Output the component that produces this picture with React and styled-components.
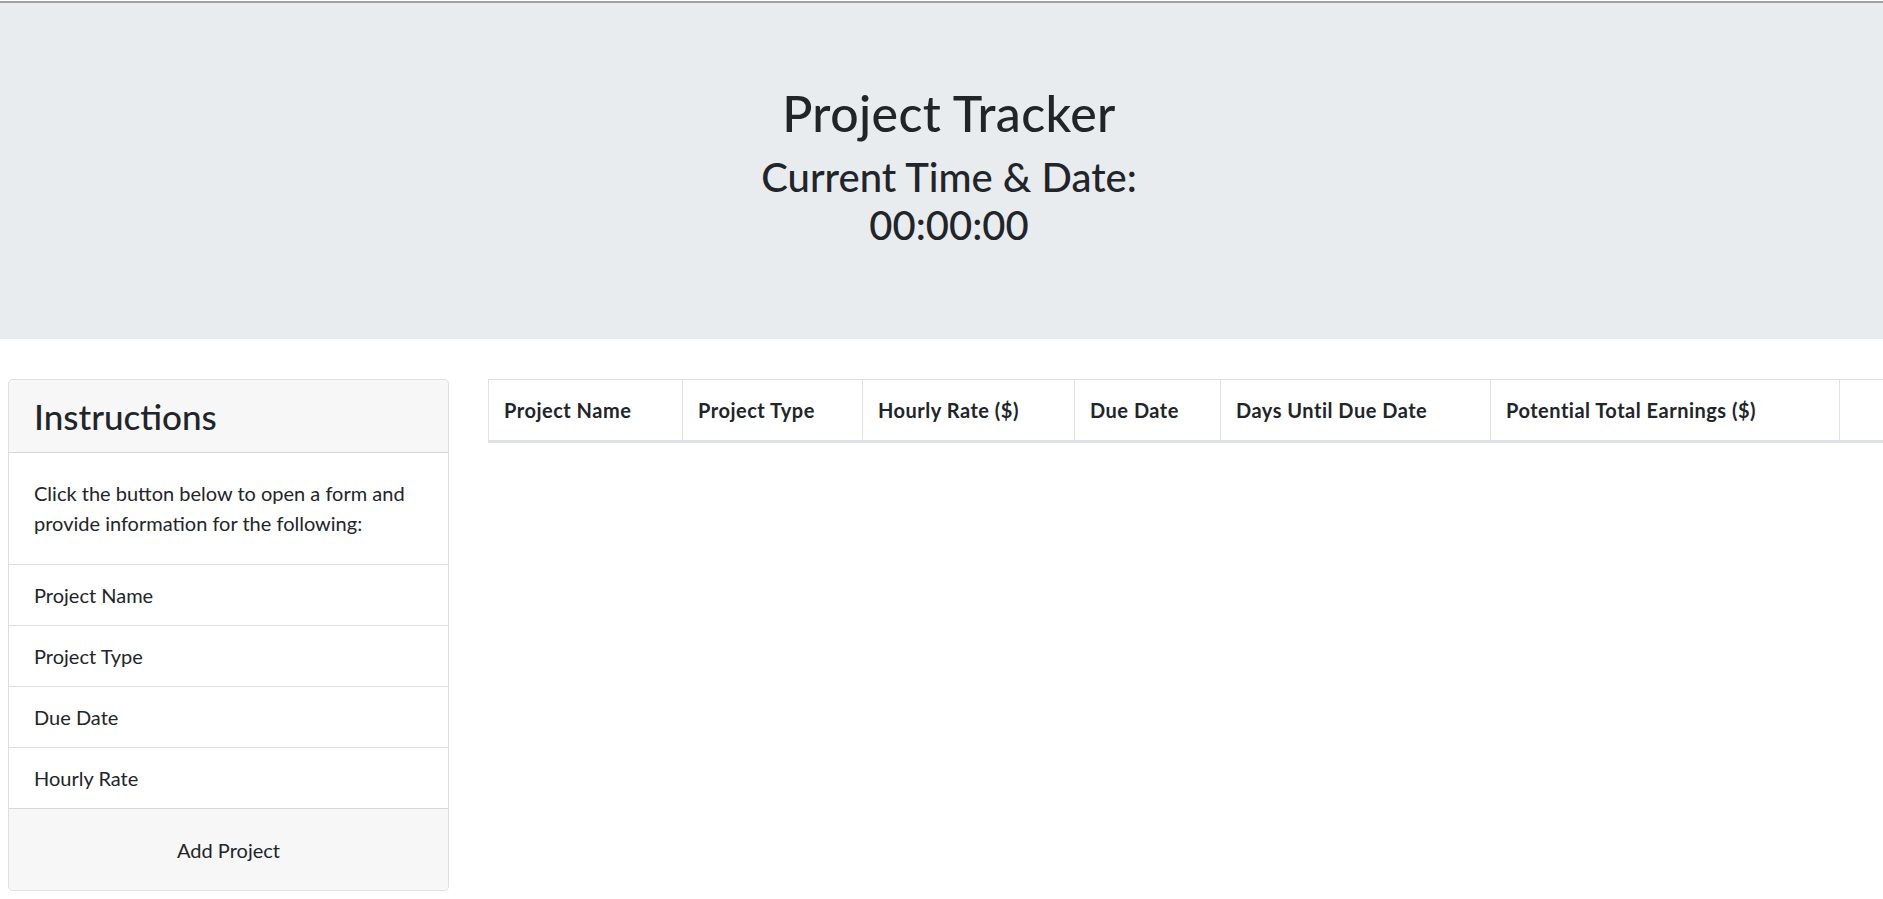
import React from "react";
import styled, { createGlobalStyle } from "styled-components";

const GlobalStyle = createGlobalStyle`
  *, *::before, *::after { box-sizing: border-box; }
  html, body { margin: 0; padding: 0; }
  body {
    font-family: "Lato", "Liberation Sans", sans-serif;
    font-size: 20px;
    line-height: 1.5;
    color: #212529;
    background: #ffffff;
    overflow-x: hidden;
  }
`;

const Jumbotron = styled.header`
  background: #e9ecef;
  padding: 0 40px 80px 55px;
  margin-bottom: 40px;
  text-align: center;
`;

const TopRule = styled.div`
  height: 2px;
  margin: 1px -40px 80px -55px;
  background: #a0a0a0;
`;

const Title = styled.h1`
  margin: 0 0 10px;
  font-size: 50px;
  font-weight: 500;
  line-height: 1.2;
  letter-spacing: 0.4px;
`;

const Clock = styled.h2`
  margin: 0 0 10px;
  font-size: 40px;
  font-weight: 500;
  line-height: 1.2;
`;

const Main = styled.main`
  display: flex;
  align-items: flex-start;
  gap: 39px;
  padding-left: 8px;
`;

const Card = styled.section`
  flex: 0 0 441px;
  display: flex;
  flex-direction: column;
  border: 1px solid rgba(0, 0, 0, 0.125);
  border-radius: 5px;
  overflow: hidden;
  background: #fff;
`;

const CardHeader = styled.div`
  padding: 15px 25px;
  background: rgba(0, 0, 0, 0.03);
  border-bottom: 1px solid rgba(0, 0, 0, 0.125);
`;

const CardTitle = styled.h3`
  margin: 0;
  font-size: 35px;
  font-weight: 500;
  line-height: 1.2;
`;

const CardBody = styled.div`
  padding: 25px 25px 26px;
`;

const CardText = styled.p`
  margin: 0;
`;

const List = styled.ul`
  list-style: none;
  margin: 0;
  padding: 0;
`;

const ListItem = styled.li`
  padding: 15px 25px;
  border-top: 1px solid rgba(0, 0, 0, 0.125);
`;

const CardFooter = styled.div`
  padding: 18px 25px;
  background: rgba(0, 0, 0, 0.03);
  border-top: 1px solid rgba(0, 0, 0, 0.125);
  display: flex;
  justify-content: center;
`;

const AddButton = styled.button`
  border: 0;
  background: transparent;
  color: #212529;
  font: inherit;
  line-height: 30px;
  padding: 7.5px 15px;
  cursor: pointer;
`;

const TableWrap = styled.div`
  flex: 1 1 auto;
  min-width: 0;
  overflow: hidden;
`;

const Table = styled.table`
  width: ${p => p.$w}px;
  border-collapse: collapse;
  table-layout: fixed;
`;

const Th = styled.th`
  width: ${p => p.$w}px;
  padding: 15px;
  text-align: left;
  font-weight: 700;
  letter-spacing: 0.5px;
  white-space: nowrap;
  vertical-align: bottom;
  border: 1px solid #dee2e6;
  border-bottom: 3px solid #dee2e6;
`;

const columns = [
  { label: "Project Name", w: 194 },
  { label: "Project Type", w: 180 },
  { label: "Hourly Rate ($)", w: 212 },
  { label: "Due Date", w: 146 },
  { label: "Days Until Due Date", w: 270 },
  { label: "Potential Total Earnings ($)", w: 349 },
  { label: "", w: 140 },
];

const tableWidth = columns.reduce((s, c) => s + c.w, 0);

const fields = ["Project Name", "Project Type", "Due Date", "Hourly Rate"];

export default function App() {
  return (
    <>
      <GlobalStyle />
      <Jumbotron>
        <TopRule />
        <Title>Project Tracker</Title>
        <Clock>
          Current Time &amp; Date:
          <br />
          00:00:00
        </Clock>
      </Jumbotron>
      <Main>
        <Card>
          <CardHeader>
            <CardTitle>Instructions</CardTitle>
          </CardHeader>
          <CardBody>
            <CardText>
              Click the button below to open a form and provide information for the following:
            </CardText>
          </CardBody>
          <List>
            {fields.map(f => (
              <ListItem key={f}>{f}</ListItem>
            ))}
          </List>
          <CardFooter>
            <AddButton type="button">Add Project</AddButton>
          </CardFooter>
        </Card>
        <TableWrap>
          <Table $w={tableWidth}>
            <thead>
              <tr>
                {columns.map((c, i) => (
                  <Th key={i} $w={c.w}>{c.label}</Th>
                ))}
              </tr>
            </thead>
            <tbody />
          </Table>
        </TableWrap>
      </Main>
    </>
  );
}
